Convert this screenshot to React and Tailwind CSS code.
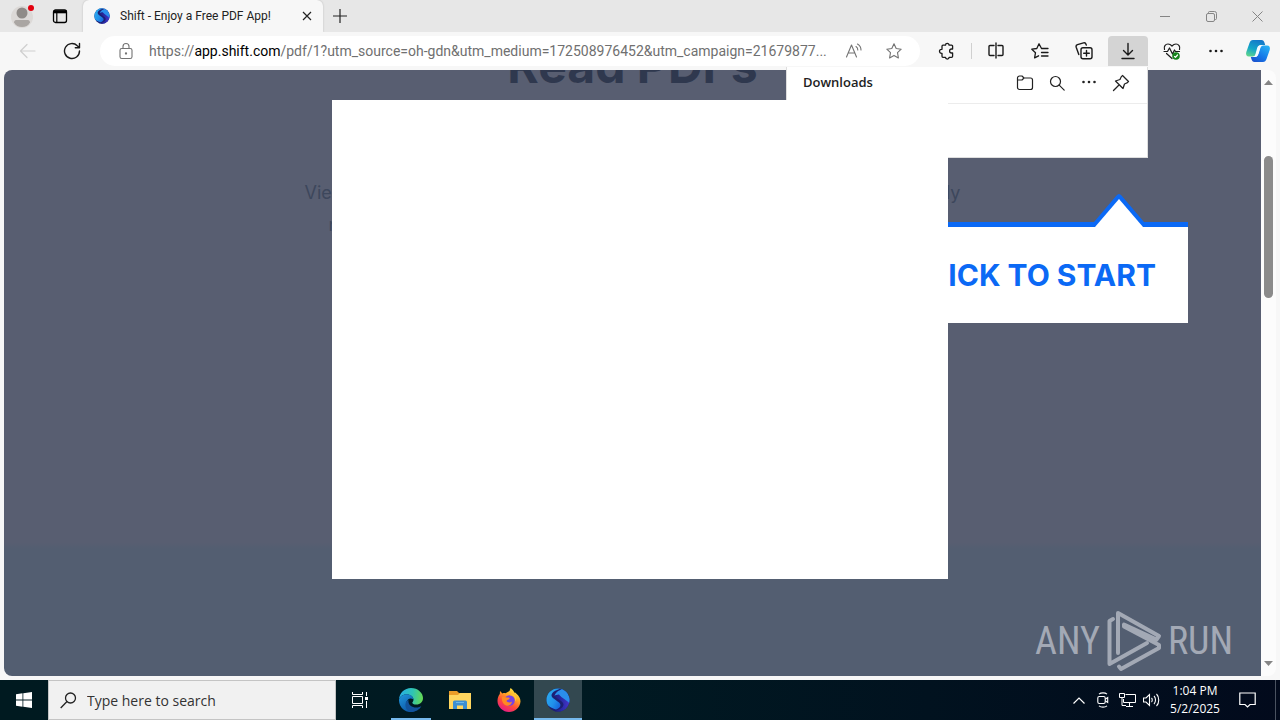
import React from "react";

function Icon({ size = 18, children, className = "", stroke = 1.2 }) {
  return (
    <svg width={size} height={size} viewBox="0 0 18 18" fill="none" stroke="currentColor" strokeWidth={stroke} strokeLinecap="round" strokeLinejoin="round" className={className} aria-hidden="true">
      {children}
    </svg>
  );
}

function ShiftLogo({ size, id }) {
  return (
    <svg width={size} height={size} viewBox="0 0 24 24" aria-hidden="true">
      <defs>
        <linearGradient id={id + "a"} x1="0" y1="0" x2="1" y2="0.6">
          <stop offset="0" stopColor="#2fb4f0" />
          <stop offset="0.6" stopColor="#2090ea" />
          <stop offset="1" stopColor="#1457d8" />
        </linearGradient>
        <linearGradient id={id + "b"} x1="0" y1="0.5" x2="1" y2="0.5">
          <stop offset="0" stopColor="#1b1668" />
          <stop offset="0.6" stopColor="#2a2aa8" />
          <stop offset="1" stopColor="#4b36cc" />
        </linearGradient>
        <clipPath id={id + "c"}><circle cx="12" cy="12" r="11.5" /></clipPath>
      </defs>
      <g clipPath={"url(#" + id + "c)"}>
        <rect width="24" height="24" fill="#1b1f74" />
        <path d="M24 11v13H4C10 23 17.500 21 17.500 16.500 17.500 13 10 11 9 8l5-2 5 3Z" fill={"url(#" + id + "b)"} />
        <path d="M0 0H19C11 1 5.500 4 5.500 7.500c0 3.500 9 6 9 9.500 0 2-2 3.500-4.500 4.500C6 20 0 18 0 13Z" fill={"url(#" + id + "a)"} />
        <path d="M8.500 8C9.500 4 14 1.500 19 0l5 10v6C21 12 15.500 10 13 6.500 11 6.600 9.500 7 8.500 8Z" fill="#2a8eec" />
      </g>
    </svg>
  );
}

function ToolButton({ label, children, className = "w-10" }) {
  return (
    <button aria-label={label} className={"flex h-[30px] shrink-0 items-center justify-center " + className}>
      {children}
    </button>
  );
}

const star = "M9 1.800l2.200 4.700 5 .7-3.700 3.500.9 5.200L9 13.400l-4.400 2.500.9-5.200L1.800 7.200l5-.7Z";

function Dots() {
  return (
    <svg width="16" height="16" viewBox="0 0 16 16" fill="currentColor" aria-hidden="true">
      <circle cx="2.500" cy="8" r="1.300" />
      <circle cx="8" cy="8" r="1.300" />
      <circle cx="13.500" cy="8" r="1.300" />
    </svg>
  );
}

function TitleBar() {
  return (
    <header className="flex h-8 shrink-0 bg-[#e7e7e7] text-[#222]">
      <button aria-label="Profile" className="flex w-11 items-center justify-center">
        <svg width="24" height="28" viewBox="0 0 24 28" aria-hidden="true">
          <circle cx="12" cy="15" r="11" fill="#dcd9d7" />
          <circle cx="12" cy="11" r="5.500" fill="#8f8b88" />
          <path d="M4 20.500c0-2 1.500-2.500 3-2.500h10c1.500 0 3 .5 3 2.500-1.500 3-4.500 4.500-8 4.500s-6.500-1.500-8-4.500Z" fill="#aaa6a3" />
          <circle cx="21" cy="6" r="3" fill="#e3000f" />
        </svg>
      </button>
      <button aria-label="Tab actions" className="flex w-[39px] items-center pl-2 text-black">
        <svg width="16" height="16" viewBox="0 0 16 16" fill="none" stroke="currentColor" aria-hidden="true">
          <rect x="1.500" y="2" width="13" height="12.500" rx="2" strokeWidth="1.300" />
          <path d="M1.500 3.800h13" strokeWidth="3" />
          <path d="M4.800 4v10" strokeWidth="1.200" />
        </svg>
      </button>
      <div className="flex w-60 items-center rounded-t-md bg-[#f7f7f7] pl-[11px] pr-2 shadow-[0_0_2px_#b5b5b5]">
        <ShiftLogo size={16} id="tab" />
        <span className="ml-2.5 flex-1 whitespace-nowrap font-['Roboto',sans-serif] text-[12px]">Shift - Enjoy a Free PDF App!</span>
        <button aria-label="Close tab" className="flex size-4 items-center justify-center">
          <svg width="10" height="10" viewBox="0 0 10 10" stroke="currentColor" strokeWidth="1.200" aria-hidden="true"><path d="M1 1l8 8M9 1l-8 8" /></svg>
        </button>
      </div>
      <button aria-label="New tab" className="flex w-[34px] items-center justify-center">
        <svg width="14" height="14" viewBox="0 0 14 14" stroke="currentColor" strokeWidth="1.200" aria-hidden="true"><path d="M7 0v14M0 7h14" /></svg>
      </button>
      <div className="ml-auto flex text-[#858585]">
        <button aria-label="Minimize" className="flex w-[46px] items-center justify-center">
          <svg width="10" height="10" viewBox="0 0 10 10" stroke="currentColor" aria-hidden="true"><path d="M0 5.500h10" /></svg>
        </button>
        <button aria-label="Restore" className="flex w-[46px] items-center justify-center">
          <svg width="11" height="11" viewBox="0 0 11 11" fill="none" stroke="currentColor" aria-hidden="true">
            <rect x="0.500" y="2.500" width="8" height="8" rx="1.500" />
            <path d="M2.500 2V1.500a1 1 0 0 1 1-1h5a2 2 0 0 1 2 2v5a1 1 0 0 1-1 1H9" />
          </svg>
        </button>
        <button aria-label="Close window" className="flex w-[46px] items-center justify-center">
          <svg width="11" height="11" viewBox="0 0 11 11" stroke="currentColor" aria-hidden="true"><path d="M.5.5l10 10M10.500.5l-10 10" /></svg>
        </button>
      </div>
    </header>
  );
}

function Toolbar() {
  return (
    <div className="flex h-[38px] shrink-0 items-center bg-[#f7f7f7] pl-2 text-[#1a1a1a]">
      <ToolButton label="Back">
        <Icon className="text-[#cfcfcf]"><path d="M16 9H1.500M8 2.500L1.500 9 8 15.500" /></Icon>
      </ToolButton>
      <ToolButton label="Refresh" className="ml-1 w-10">
        <Icon stroke={1.400}><path d="M16.500 9a7.500 7.500 0 1 1-2.200-5.300L16.200 5.500M16.500 1.500v4.200h-4.200" /></Icon>
      </ToolButton>
      <div className="ml-2 flex h-[30px] min-w-0 flex-1 items-center rounded-full bg-white pl-[17px] pr-1.5 text-[#737373]">
        <Icon stroke={1.100}>
          <rect x="3" y="6.500" width="12" height="10" rx="1.800" />
          <path d="M6 6.500V4.500a3 3 0 0 1 6 0v2" />
          <circle cx="9" cy="11.500" r="0.600" fill="currentColor" />
        </Icon>
        <a href="#page" className="ml-3.5 min-w-0 flex-1 whitespace-nowrap font-['Roboto',sans-serif] text-[14px] text-[#707070]">
          https://<span className="text-black">app.shift.com</span>/pdf/1?utm_source=oh-gdn&amp;utm_medium=172508976452&amp;utm_campaign=21679877...
        </a>
        <ToolButton label="Read aloud">
          <Icon stroke={1.100}><path d="M1.500 15L6.500 3l5 12M3.200 11h6.600M11 4.500a4 4 0 0 1 1.800 3.500M12.500 2a7 7 0 0 1 3.500 6" /></Icon>
        </ToolButton>
        <ToolButton label="Add to favorites"><Icon stroke={1.100}><path d={star} /></Icon></ToolButton>
      </div>
      <ToolButton label="Extensions" className="ml-[7px] w-10">
        <Icon stroke={1.300}><path d="M5 3.200h2.500a1.800 1.800 0 0 1 3.600 0h2.500a1 1 0 0 1 1 1V7h-1a2 2 0 0 0 0 4h1v3.300a1 1 0 0 1-1 1h-2.500a1.800 1.800 0 0 1-3.600 0H5a1 1 0 0 1-1-1v-3h-.5a2 2 0 0 1 0-4H4V4.200a1 1 0 0 1 1-1Z" /></Icon>
      </ToolButton>
      <span className="mx-1 h-4 w-px shrink-0 bg-[#d0d0d0]" />
      <div className="flex gap-1">
        <ToolButton label="Split screen">
          <Icon stroke={1.400}><path d="M7 3.500H3a1 1 0 0 0-1 1v8a1 1 0 0 0 1 1h4M11 3.500h4a1 1 0 0 1 1 1v8a1 1 0 0 1-1 1h-4M9 1v15" /></Icon>
        </ToolButton>
        <ToolButton label="Favorites">
          <Icon stroke={1.300}><path d="M10.500 6.500L8 1.800 5.800 6.500l-5 .7 3.700 3.500-.9 5.200 4-2.100M10.500 6.500H17M10.500 10.500H17M10.500 14H17" /></Icon>
        </ToolButton>
        <ToolButton label="Collections">
          <Icon stroke={1.400}>
            <rect x="6" y="5.800" width="11" height="11" rx="2" />
            <path d="M11.500 8.500v5.600M8.700 11.300h5.600M3.800 12.500L1.200 5.200a2 2 0 0 1 1.300-2.500L8.500.9a2 2 0 0 1 2.500 1.300l.3.900" />
          </Icon>
        </ToolButton>
        <ToolButton label="Downloads" className="w-10 rounded-t bg-[#d4d4d4]">
          <Icon stroke={1.400}><path d="M9 1.500v11M4.500 8.500L9 13l4.500-4.500M3 16.500h12" /></Icon>
        </ToolButton>
        <ToolButton label="Browser essentials">
          <Icon stroke={1.200}>
            <path d="M1.500 7.500C.5 4.500 2.500 2 5 2c1.800 0 3 .9 4 2 1-1.100 2.200-2 4-2 2.500 0 4.500 2.500 3.500 5.500M1 9.500h3.500L6.500 6l3 6 2-4 1 1.500h4M3.500 11.500L9 16.500" />
            <circle cx="13" cy="14" r="3.800" fill="#16831c" stroke="none" />
            <path d="M11.500 14.500l1 .8 2-2.300" stroke="#fff" />
          </Icon>
        </ToolButton>
        <ToolButton label="Settings and more"><Dots /></ToolButton>
      </div>
      <ToolButton label="Copilot" className="ml-1 mr-1 w-9">
        <svg width="26" height="24" viewBox="0 0 26 24" aria-hidden="true">
          <defs>
            <linearGradient id="cpa" x1="0.600" y1="0" x2="0.200" y2="1">
              <stop offset="0" stopColor="#1478c9" /><stop offset="0.550" stopColor="#14a6c8" /><stop offset="1" stopColor="#5fd58c" />
            </linearGradient>
            <linearGradient id="cpb" x1="0.900" y1="0" x2="0.200" y2="1">
              <stop offset="0" stopColor="#28b4f5" /><stop offset="0.600" stopColor="#1678e8" /><stop offset="1" stopColor="#1a52ce" />
            </linearGradient>
          </defs>
          <path d="M8 1h8.500c1.700 0 2.500 1.200 3 2.800L20.200 6H16c-1.700 0-2.500 1-3 2.500l-2 6.500c-.6 1.800-1.600 2.500-3.200 2.500H4c-2.500 0-3.500-2-2.700-4.600L4.500 4C5.200 2 6.200 1 8 1Z" fill="url(#cpa)" />
          <path d="M18 23H9.500c-1.700 0-2.500-1.200-3-2.800L5.800 18H10c1.700 0 2.500-1 3-2.500L15 9c.6-1.800 1.600-2.500 3.200-2.500H22c2.500 0 3.500 2 2.700 4.600L21.500 20c-.7 2-1.700 3-3.500 3Z" fill="url(#cpb)" />
          <path d="M12 9.500c.5-2 1.800-3.200 3.500-3.200h2.500c-1.500.5-2.200 1.500-2.700 3l-1.600 5.200c-.6 2-1.700 3.300-3.500 3.500H7.800c1.500-.5 2.200-1.500 2.700-3Z" fill="#f4faff" />
        </svg>
      </ToolButton>
    </div>
  );
}

function Downloads() {
  return (
    <section aria-label="Downloads" className="absolute right-[132px] top-[67px] h-[91px] w-[362px] border border-t-0 border-[#dedede] bg-white text-[#222]">
      <div className="flex h-[37px] items-center border-b border-[#ececec] pl-4 pr-2.5 pb-1">
        <h2 className="flex-1 text-[13px] font-semibold">Downloads</h2>
        <div className="flex">
          <button aria-label="Open downloads folder" className="flex w-8 justify-center">
            <Icon stroke={1.200}><path d="M1.500 6V4a2 2 0 0 1 2-2H6l2 2h6.500a2 2 0 0 1 2 2v7.500a2 2 0 0 1-2 2h-11a2 2 0 0 1-2-2V6H6l2-2" /></Icon>
          </button>
          <button aria-label="Search downloads" className="flex w-8 justify-center">
            <Icon><circle cx="7.500" cy="7.500" r="5" /><path d="M11.200 11.200l5 5" /></Icon>
          </button>
          <button aria-label="More options" className="flex w-8 justify-center"><Dots /></button>
          <button aria-label="Pin downloads" className="flex w-8 justify-center">
            <Icon stroke={1.300}><path d="M10.500 1.500l6 6c-.5 1.300-2.500 2-4 2.500L11 14.500 3.500 7 8 5.500c.6-1.500 1.200-3.500 2.500-4ZM7 11l-5.500 5.500" /></Icon>
          </button>
        </div>
      </div>
    </section>
  );
}

function Callout() {
  return (
    <aside className="absolute right-[92px] top-[193px] w-72 text-[#0b69f5]">
      <svg className="ml-auto mr-11 block" width="50" height="34" viewBox="0 0 50 34" aria-hidden="true">
        <path d="M0 29L22.500 2.500Q25-.5 27.500 2.500L50 29v5H0Z" fill="#0b69f5" />
        <path d="M1 34L25 6l24 28Z" fill="#fff" />
      </svg>
      <div className="-mt-[5px] h-[5px] w-full bg-[linear-gradient(to_right,#0b69f5_calc(100%-94px),transparent_calc(100%-94px),transparent_calc(100%-44px),#0b69f5_calc(100%-44px))]" />
      <div className="flex h-24 items-center justify-end whitespace-nowrap bg-white pr-8 font-['Inter',sans-serif] text-[30px] font-bold">CLICK TO START</div>
    </aside>
  );
}

function Watermark() {
  return (
    <div className="absolute bottom-1 right-7 flex items-center gap-1.5 font-['Roboto_Condensed','Liberation_Sans_Narrow','Liberation_Sans',sans-serif] text-[38px] leading-none text-[#a3a9b5]">
      <span>ANY</span>
      <svg width="56" height="62" viewBox="0 0 56 62" fill="none" stroke="currentColor" strokeWidth="4" strokeLinejoin="round" strokeLinecap="round" aria-hidden="true">
        <path d="M7 9L3.500 11V54L41 33" />
        <path d="M12 43V3l41 23-2.500 3.500L18 14.500v2L53 35v3L15 59l-2-2.500" />
      </svg>
      <span>RUN</span>
    </div>
  );
}

function PageView() {
  return (
    <div className="flex min-h-0 flex-1 bg-[#f7f7f7] px-1 pb-1">
      <main id="page" className="relative min-w-0 flex-1 overflow-hidden rounded-l-lg bg-[linear-gradient(#585e71_0%,#585e71_78%,#535e71_79%,#535e71_100%)] font-['Inter',sans-serif]">
        <h1 className="-mt-8 text-center text-[48px] font-bold leading-[56px] text-[#2f384e]">Read PDFs</h1>
        <div className="mx-auto mt-[83px] w-[656px] text-[18px] leading-8 text-[#3d475c]">
          <p className="flex justify-between"><span>View</span><span>ly</span></p>
          <p className="pl-6">n</p>
        </div>
        <Watermark />
      </main>
      <div aria-hidden="true" className="flex w-[15px] flex-col items-center justify-between rounded-r-lg bg-[#fcfcfc] py-2">
        <svg width="9" height="9" viewBox="0 0 9 9" fill="#858585"><path d="M0 7L4.500 2 9 7Z" /></svg>
        <div className="mb-auto mt-[69px] h-[142px] w-[9px] rounded-full bg-[#8b8b8b]" />
        <svg width="9" height="9" viewBox="0 0 9 9" fill="#858585"><path d="M0 2l4.500 5L9 2Z" /></svg>
      </div>
    </div>
  );
}

function TaskApp({ label, children, className = "" }) {
  return (
    <button aria-label={label} className={"relative flex w-12 items-center justify-center " + className}>
      {children}
    </button>
  );
}

function Taskbar() {
  return (
    <footer className="flex h-10 shrink-0 bg-[linear-gradient(to_right,#001a20,#001a22_45%,#020a1c)] text-white">
      <TaskApp label="Start">
        <svg width="16" height="16" viewBox="0 0 16 16" fill="#fff" aria-hidden="true"><path d="M0 2.200l6.500-.9v6.300H0ZM7.300 1.200L16 0v7.600H7.300ZM0 8.400h6.500v6.300L0 13.800ZM7.300 8.400H16V16l-8.700-1.200Z" /></svg>
      </TaskApp>
      <label className="flex w-72 items-center border border-[#c4c4c4] bg-[#f1f1f1] pl-[11px] text-[#222]">
        <svg width="17" height="17" viewBox="0 0 17 17" fill="none" stroke="currentColor" strokeWidth="1.300" aria-hidden="true"><circle cx="10.500" cy="6" r="5" /><path d="M7 9.500L.7 16" /></svg>
        <input aria-label="Search" placeholder="Type here to search" className="ml-2.5 min-w-0 flex-1 bg-transparent text-[14px] outline-none placeholder:text-[#333]" />
      </label>
      <div className="flex gap-px">
        <TaskApp label="Task view">
          <svg width="16" height="16" viewBox="0 0 16 16" fill="none" stroke="currentColor" aria-hidden="true"><path d="M.5 0v2.500h10V0M.5 16v-2.500h10V16M.5 4.500h10v7H.5ZM14.500 0v4M14.500 9v7" /><path d="M13 5h3v3h-3Z" fill="currentColor" stroke="none" /></svg>
        </TaskApp>
        <TaskApp label="Microsoft Edge" className="ml-0.5">
          <svg width="24" height="24" viewBox="0 0 24 24" aria-hidden="true">
            <defs>
              <linearGradient id="ea" x1="0" y1="0.400" x2="1" y2="0.500"><stop offset="0" stopColor="#27aee8" /><stop offset="0.550" stopColor="#2fc4b4" /><stop offset="1" stopColor="#66da52" /></linearGradient>
              <linearGradient id="eb" x1="0" y1="0" x2="0.600" y2="1"><stop offset="0" stopColor="#2196dc" /><stop offset="1" stopColor="#0c58a8" /></linearGradient>
            </defs>
            <path d="M0 11.500C.4 5 5.500 0 12 0c7 0 12 5 12 10 0 4-3 6.500-6.500 6.500-3 0-4.200-1-4.200-1.800 0-.8 1.200-1.200 1.200-3C14.500 8.500 11 6.200 7.500 6.200 4 6.200 1 8.500 0 11.500Z" fill="url(#ea)" />
            <path d="M0 11.500C1 8.500 4 6.200 7.500 6.200c4 0 6.600 2.300 6.900 5-4-2-7 .8-7 4.300 0 4 3.500 8 8.500 8A12 12 0 0 1 0 11.500Z" fill="url(#eb)" />
            <path d="M9.500 11.700c-.8 5 3 7.800 7.500 7.800 2.500 0 4.600-1 5.300-1.300-2 3.700-6.300 5.900-10.300 5.700-4-.8-6-4.500-5.500-8 .2-2 1.400-3.500 3-4.200Z" fill="#12539c" />
          </svg>
          <span className="absolute inset-x-1 bottom-0 h-0.5 bg-[#76b9ed]" />
        </TaskApp>
        <TaskApp label="File Explorer">
          <svg width="22" height="20" viewBox="0 0 22 20" aria-hidden="true">
            <path d="M0 1h8l2 2h11v5H0Z" fill="#eb9d28" />
            <path d="M0 5h9l2-2h11v16H0Z" fill="#ffd65f" />
            <path d="M4 19v-7a1.500 1.500 0 0 1 1.500-1.500h11A1.500 1.500 0 0 1 18 12v7h-4v-3.500H8V19Z" fill="#3b8fd3" />
            <path d="M7 12.500h8" stroke="#6bb7ea" />
          </svg>
        </TaskApp>
        <TaskApp label="Firefox">
          <svg width="24" height="24" viewBox="0 0 24 24" aria-hidden="true">
            <defs><linearGradient id="fa" x1="0.800" y1="0" x2="0.250" y2="1"><stop offset="0" stopColor="#fff04a" /><stop offset="0.350" stopColor="#ffaa24" /><stop offset="0.650" stopColor="#ff4c38" /><stop offset="1" stopColor="#e5168e" /></linearGradient></defs>
            <path d="M13.500 0c2 1.200 3.300 3 3.700 4.500 1-.3 1.500.2 2 1C22 7.500 23.500 10.500 23.500 13.500 23 19.500 18 24 12 24S.5 19 .5 13c0-3 1-5.500 2.300-7L3 3l2.500 2.500C6.500 5 7.500 5 8.500 5.200L12.500 3Z" fill="url(#fa)" />
            <circle cx="12.500" cy="12.500" r="5.300" fill="#7542e4" />
            <path d="M5 9c2-1 4 .5 6 .5 1.500 0 2 .5 1.500 1.300-1 1.200-2.500.7-3 2.200 1.500 2 4 1.500 5.500.5-.5 4-4.500 5-7 3.500C5.500 15.500 4.500 12 5 9Z" fill="#ff8a22" />
            <path d="M12.500 7.500c4-1 6.500 2 5.300 6 1.200-1 1.700-2.500 1.600-4C18 6.500 15 5.500 12.500 7.500Z" fill="#ffc63a" />
          </svg>
        </TaskApp>
        <TaskApp label="Shift" className="bg-[#334850]">
          <ShiftLogo size={24} id="task" />
          <span className="absolute inset-x-0 bottom-0 h-0.5 bg-[#76b9ed]" />
        </TaskApp>
      </div>
      <div className="ml-auto flex items-stretch">
        <button aria-label="Show hidden icons" className="flex w-6 items-center justify-center">
          <svg width="12" height="7" viewBox="0 0 12 7" fill="none" stroke="currentColor" strokeWidth="1.200" aria-hidden="true"><path d="M.5 6.500L6 1l5.500 5.500" /></svg>
        </button>
        <button aria-label="Meet now" className="flex w-6 items-center justify-center">
          <svg width="12" height="16" viewBox="0 0 12 16" fill="none" stroke="currentColor" strokeWidth="1.100" aria-hidden="true"><rect x="0.800" y="4.500" width="7.400" height="7" rx="1.500" /><path d="M8.200 7.200l2.500-1.700v5L8.200 8.800M2 2.200c2-1.800 6-1.800 8 0M2 13.800c2 1.800 6 1.800 8 0" /></svg>
        </button>
        <button aria-label="Network" className="flex w-6 items-center justify-center">
          <svg width="17" height="16" viewBox="0 0 17 16" fill="none" stroke="currentColor" aria-hidden="true"><path d="M6.500 2.500h10v8h-12V7M10.500 10.500V14M7 14.500h7M.5 1.500h5v4h-5ZM3 5.500v8h4" /></svg>
        </button>
        <button aria-label="Volume" className="flex w-6 items-center justify-center">
          <svg width="17" height="14" viewBox="0 0 17 14" fill="none" stroke="currentColor" strokeWidth="1.100" aria-hidden="true"><path d="M.5 5H3l3.500-3.500v11L3 9H.5ZM8.500 5c1 1 1 3 0 4M11 3c2 2 2 6 0 8M13.500 1c3 3 3 9 0 12" /></svg>
        </button>
        <time className="flex w-16 flex-col items-center justify-center text-[12px] leading-[18px]"><span>1:04 PM</span><span>5/2/2025</span></time>
        <button aria-label="Notifications" className="flex w-10 items-center justify-center">
          <svg width="17" height="16" viewBox="0 0 17 16" fill="none" stroke="currentColor" strokeWidth="1.200" aria-hidden="true"><path d="M.8 1h15.400v11.500H11L8.500 15 6 12.500H.8Z" /></svg>
        </button>
        <button aria-label="Show desktop" className="ml-2 w-[5px] border-l border-[#4a5260]" />
      </div>
    </footer>
  );
}

export default function App() {
  return (
    <div className="flex h-screen flex-col overflow-hidden font-['Open_Sans','Noto_Sans',sans-serif]">
      <div className="relative flex min-h-0 flex-1 flex-col">
        <TitleBar />
        <Toolbar />
        <PageView />
        <Downloads />
        <Callout />
        <div className="pointer-events-none absolute inset-x-0 bottom-0.5 top-0 flex items-center justify-center">
          <div role="dialog" aria-label="Shift" className="h-[479px] w-[616px] bg-white" />
        </div>
      </div>
      <Taskbar />
    </div>
  );
}
